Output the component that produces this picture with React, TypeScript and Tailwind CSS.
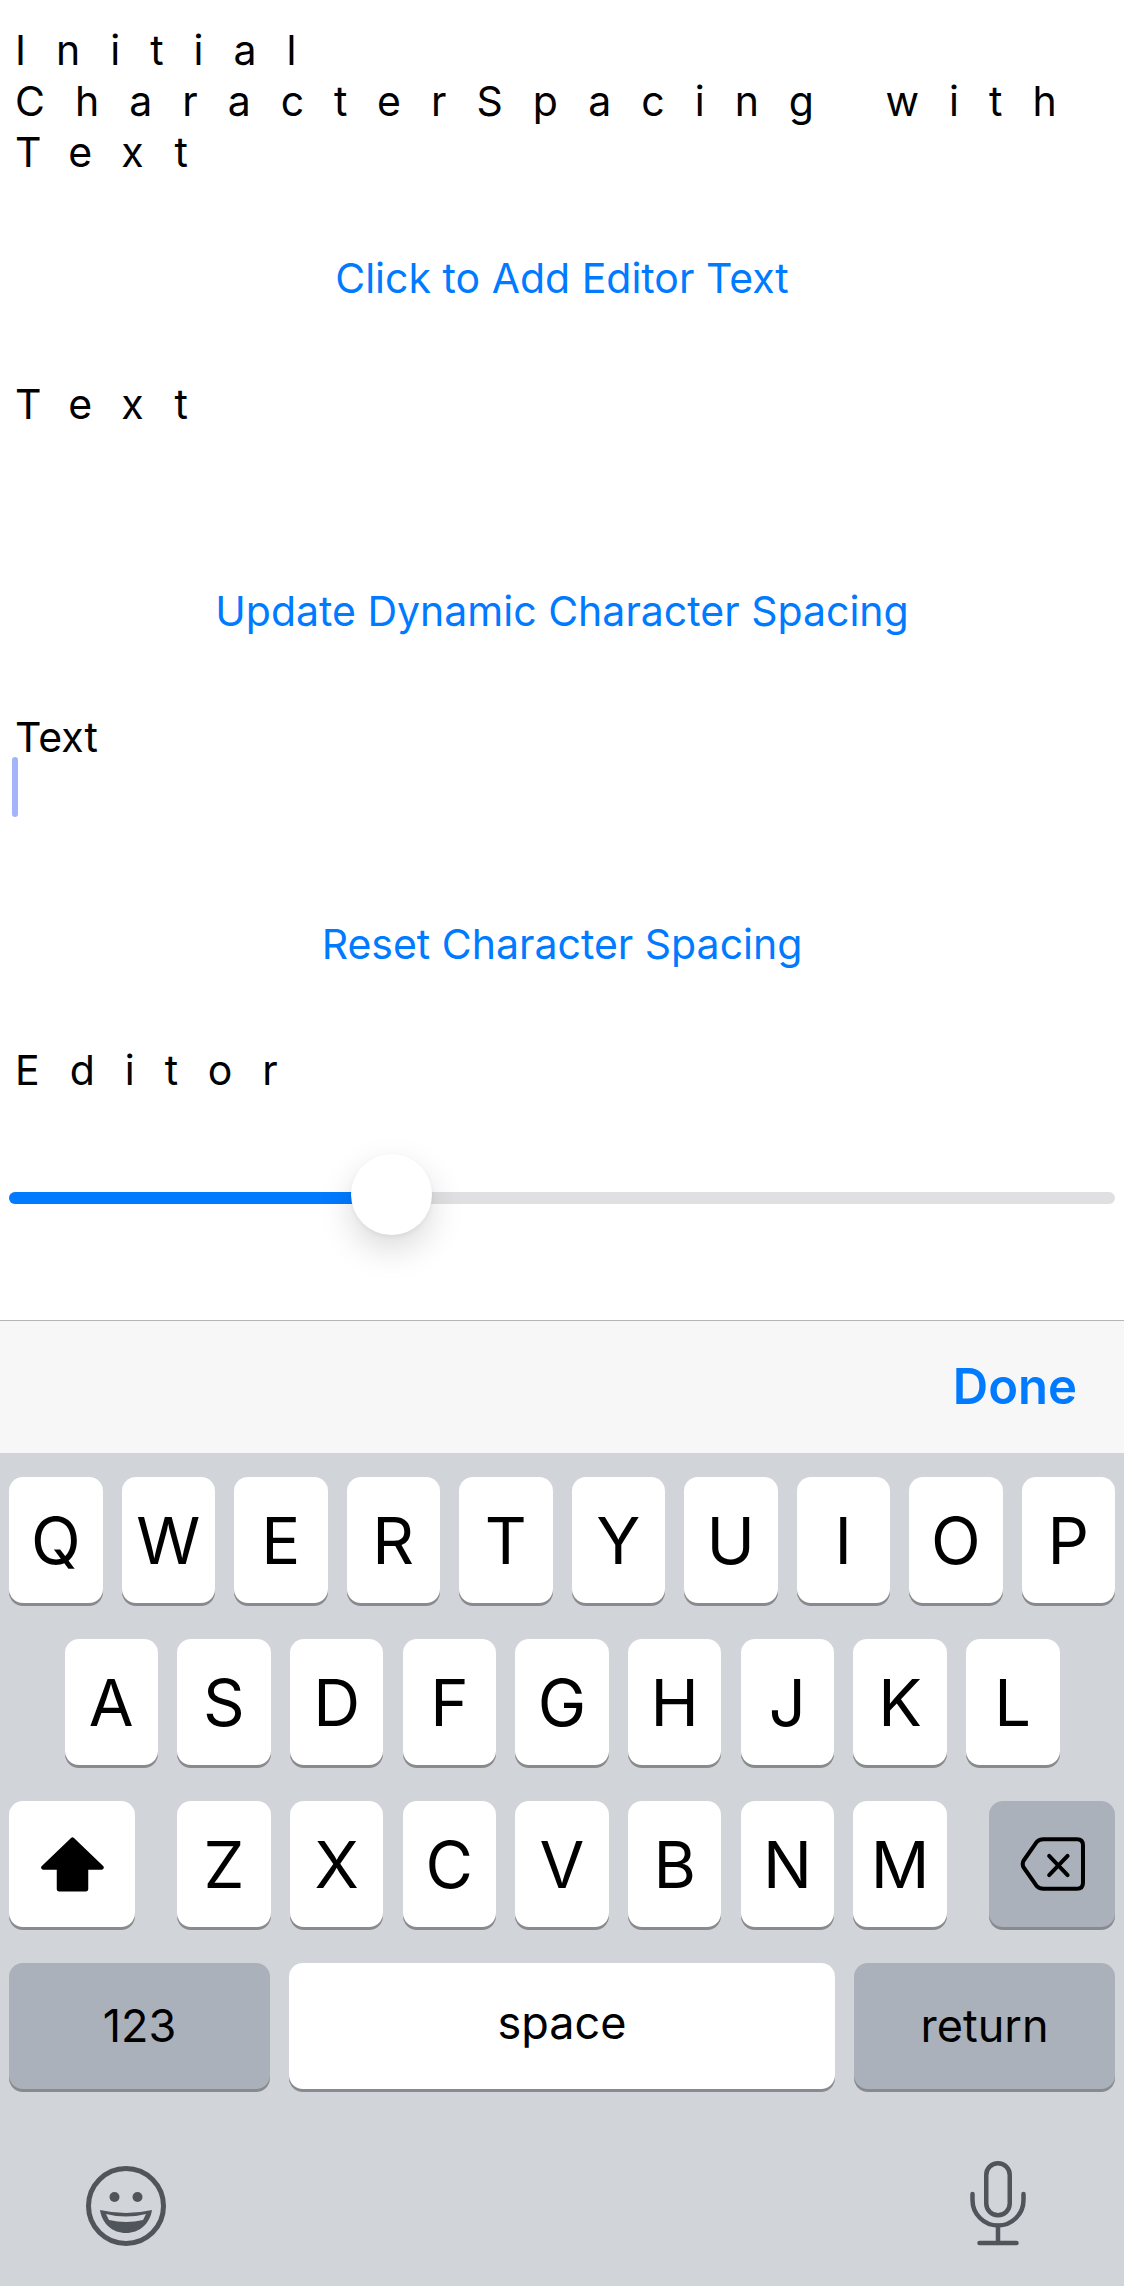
import React from "react";

const rows = [
  ["Q", "W", "E", "R", "T", "Y", "U", "I", "O", "P"],
  ["A", "S", "D", "F", "G", "H", "J", "K", "L"],
  ["Z", "X", "C", "V", "B", "N", "M"],
];

const keyBase = "flex items-center justify-center rounded-[14px] shadow-[0_3px_0_#898a8d] text-black";

function LetterKey({ label }: { label: string }) {
  return <div className={`${keyBase} w-[93.5px] h-[126px] bg-white text-[65px] leading-none`}>{label}</div>;
}

function ShiftIcon() {
  return (
    <svg width="63" height="55" viewBox="0 0 190 164">
      <path d="M95 7 L7 91 H54 V157 H136 V91 H183 Z" fill="#000" stroke="#000" strokeWidth="13" strokeLinejoin="round" />
    </svg>
  );
}

function DeleteIcon() {
  return (
    <svg width="65" height="54" viewBox="0 0 194 160">
      <path
        d="M70 6 H170 Q188 6 188 24 V136 Q188 154 170 154 H70 Q58 154 50 146 L12 92 Q4 80 12 68 L50 14 Q58 6 70 6 Z"
        fill="none"
        stroke="#000"
        strokeWidth="12"
        strokeLinejoin="round"
      />
      <path d="M87 56 L142 113 M142 56 L87 113" stroke="#000" strokeWidth="12" strokeLinecap="round" />
    </svg>
  );
}

function EmojiIcon() {
  return (
    <svg width="80" height="80" viewBox="0 0 80 80" className="mt-[5px]">
      <circle cx="40" cy="40" r="37.5" fill="none" stroke="#50555c" strokeWidth="5" />
      <circle cx="28.5" cy="31" r="5" fill="#50555c" />
      <circle cx="51.5" cy="31" r="5" fill="#50555c" />
      <path d="M14 44 Q40 50 66 44 C64 58 53 67 40 67 C27 67 16 58 14 44 Z" fill="#50555c" />
      <path d="M20 48 Q40 53 60 48 L57 54 Q40 58 23 54 Z" fill="#d1d4d9" />
    </svg>
  );
}

function MicIcon() {
  return (
    <svg width="56" height="85" viewBox="0 0 56 85" fill="none" stroke="#50555c" strokeWidth="4.5" strokeLinecap="round">
      <rect x="16.25" y="2.25" width="23.5" height="52" rx="11.75" />
      <path d="M2.5 33 V39 A25.5 25.5 0 0 0 53.5 39 V33" />
      <path d="M28 65 V82 M9.5 82 H46.5" />
    </svg>
  );
}

export default function App() {
  const label = "text-[41px] leading-[51px] tracking-[30px] text-black";
  const action = "h-[60px] flex items-center justify-center text-[41px] text-[#007aff]";

  return (
    <div className="w-[1124px] h-[2286px] flex flex-col bg-white font-['Inter',sans-serif] overflow-hidden">
      <div className="flex-1 flex flex-col">
        <p className={`${label} pt-[25px] px-[15px]`}>Initial CharacterSpacing with Text</p>

        <div className="flex flex-col gap-[152px] pt-[71px]">
          <div>
            <div className={action}>Click to Add Editor Text</div>
            <p className={`${label} mt-[70px] px-[15px]`}>Text</p>
          </div>
          <div>
            <div className={action}>Update Dynamic Character Spacing</div>
            <div className="relative mt-[70px] px-[15px]">
              <p className="text-[41px] leading-[51px] text-black">Text</p>
              <div className="absolute left-[12px] top-[45px] w-[6px] h-[60px] rounded-full bg-[#a2b5f9]" />
            </div>
          </div>
          <div>
            <div className={action}>Reset Character Spacing</div>
            <p className={`${label} mt-[70px] px-[15px]`}>Editor</p>
          </div>
        </div>

        <div className="relative h-[81px] mt-[58px] mx-[9px] flex items-center">
          <div className="w-full h-[12px] mt-[7px] flex rounded-full overflow-hidden bg-[#e0e0e2]">
            <div className="w-[350px] bg-[#007aff]" />
          </div>
          <div className="absolute left-[342px] top-0 w-[81px] h-[81px] rounded-full bg-white shadow-[0_14px_34px_rgba(0,0,0,0.15),0_2px_5px_rgba(0,0,0,0.05)]" />
        </div>
      </div>

      <div className="h-[133px] shrink-0 border-t border-[#b5b5b7] bg-[#f7f7f7] flex items-center justify-end pr-[47px]">
        <span className="text-[49px] font-semibold text-[#007aff]">Done</span>
      </div>

      <div className="h-[833px] shrink-0 bg-[#d1d4d9] flex flex-col pt-[24px] px-[9px]">
        <div className="flex justify-between">
          {rows[0].map((k) => (
            <LetterKey key={k} label={k} />
          ))}
        </div>

        <div className="flex justify-center gap-[19.2px] mt-[36px]">
          {rows[1].map((k) => (
            <LetterKey key={k} label={k} />
          ))}
        </div>

        <div className="flex justify-between mt-[36px]">
          <div className={`${keyBase} w-[126px] h-[126px] bg-white`}>
            <ShiftIcon />
          </div>
          <div className="flex gap-[19.2px]">
            {rows[2].map((k) => (
              <LetterKey key={k} label={k} />
            ))}
          </div>
          <div className={`${keyBase} w-[126px] h-[126px] bg-[#abb1bb]`}>
            <DeleteIcon />
          </div>
        </div>

        <div className="flex justify-between mt-[36px]">
          <div className={`${keyBase} w-[261px] h-[126px] bg-[#abb1bb] text-[45px]`}>123</div>
          <div className={`${keyBase} w-[546px] h-[126px] bg-white text-[45px] pb-[6px]`}>space</div>
          <div className={`${keyBase} w-[261px] h-[126px] bg-[#abb1bb] text-[45px]`}>return</div>
        </div>

        <div className="flex justify-between items-start mt-[72px] pl-[77px] pr-[89px]">
          <EmojiIcon />
          <MicIcon />
        </div>
      </div>
    </div>
  );
}
